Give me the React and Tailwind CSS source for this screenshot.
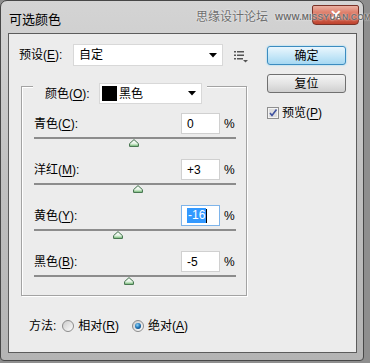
import React from 'react'

const SLIDERS = [
  { name: '青色', key: 'C', value: '0', v: 0 },
  { name: '洋红', key: 'M', value: '+3', v: 4 },
  { name: '黄色', key: 'Y', value: '-16', v: -16, selected: true },
  { name: '黑色', key: 'B', value: '-5', v: -5 },
]

function Mn({ label, k }) {
  return (
    <>
      {label}(<span className="underline underline-offset-[2px]">{k}</span>):
    </>
  )
}

function Arrow() {
  return (
    <svg width="8" height="5" viewBox="0 0 8 5" className="ml-auto">
      <path d="M0 0 H8 L4 4.5 Z" fill="#000" />
    </svg>
  )
}

function Thumb() {
  return (
    <svg width="10" height="8" viewBox="0 0 10 8">
      <defs>
        <linearGradient id="thumbFill" x1="0" y1="0" x2="0" y2="1">
          <stop offset="0" stopColor="#ffffff" />
          <stop offset="0.55" stopColor="#e8f4e8" />
          <stop offset="1" stopColor="#7cc47c" />
        </linearGradient>
      </defs>
      <path d="M5 0.6 L9.4 4.6 L9.4 7.4 L0.6 7.4 L0.6 4.6 Z" fill="url(#thumbFill)" stroke="#3e6e48" strokeWidth="1" />
    </svg>
  )
}

function MenuIcon() {
  return (
    <svg width="14" height="12" viewBox="0 0 14 12">
      <rect x="0" y="0" width="2" height="1.5" fill="#555" />
      <rect x="3" y="0" width="7" height="1.5" fill="#555" />
      <rect x="0" y="3.5" width="2" height="1.5" fill="#555" />
      <rect x="3" y="3.5" width="7" height="1.5" fill="#555" />
      <rect x="0" y="7" width="2" height="1.5" fill="#555" />
      <rect x="3" y="7" width="6" height="1.5" fill="#555" />
      <path d="M9 9 H14 L11.5 11.5 Z" fill="#555" />
    </svg>
  )
}

function SliderRow({ s, first }) {
  return (
    <div className={first ? 'mt-[9px]' : 'mt-[12px]'}>
      <div className="flex items-center h-[21px]">
        <span className="leading-none">
          <Mn label={s.name} k={s.key} />
        </span>
        <div
          className={`ml-auto w-[39px] h-[21px] bg-white flex items-center pl-[5px] border ${
            s.selected ? 'border-[#7eb4ea]' : 'border-[#d0d0d0]'
          }`}
        >
          {s.selected ? (
            <span className="flex items-center">
              <span className="bg-[#3399ff] text-white leading-[15px] px-[1px]">{s.value}</span>
              <span className="w-[1px] h-[14px] bg-black" />
            </span>
          ) : (
            <span className="leading-none">{s.value}</span>
          )}
        </div>
        <span className="ml-[4px] w-[12px] leading-none">%</span>
      </div>
      <div className="relative mt-[3px] h-[2px] bg-[#8c8c8c]">
        <div className="absolute top-[2px]" style={{ left: 100 + s.v - 5 }}>
          <Thumb />
        </div>
      </div>
      <div className="h-[8px]" />
    </div>
  )
}

function Radio({ checked }) {
  return (
    <svg width="12" height="12" viewBox="0 0 12 12">
      <defs>
        <linearGradient id={checked ? 'rOn' : 'rOff'} x1="0" y1="0" x2="1" y2="1">
          <stop offset="0" stopColor="#c9c9c9" />
          <stop offset="1" stopColor="#ffffff" />
        </linearGradient>
        <radialGradient id="dot" cx="0.4" cy="0.35" r="0.7">
          <stop offset="0" stopColor="#8fd6f8" />
          <stop offset="0.6" stopColor="#2477b8" />
          <stop offset="1" stopColor="#0d4a80" />
        </radialGradient>
      </defs>
      <circle cx="6" cy="6" r="5.5" fill={`url(#${checked ? 'rOn' : 'rOff'})`} stroke="#8a8a8a" strokeWidth="1" />
      {checked && <circle cx="6" cy="6" r="3" fill="url(#dot)" />}
    </svg>
  )
}

export default function App() {
  return (
    <div className="w-[370px] h-[363px] bg-[#8e8e8e] font-['Liberation_Sans','Noto_Sans_CJK_SC',sans-serif] text-[12px] text-black overflow-hidden">
      <div className="w-[364px] h-[361px] rounded-t-[7px] rounded-b-[4px] border border-[#474747] bg-gradient-to-b from-[#d4d4d4] via-[#c0c0c0] to-[#b4b4b4]">
        {/* title bar */}
        <div className="relative h-[32px] flex items-center pl-[8px]">
          <span className="text-[13px] leading-none mt-[4px]">可选颜色</span>
          <div className="absolute right-[4px] top-[4px] w-[47px] h-[20px] rounded-b-[4px] rounded-t-[2px] border border-[#7a3328] bg-gradient-to-b from-[#eab0a2] via-[#d66a55] to-[#c0442f] flex items-center justify-center">
            <span className="text-white font-bold text-[14px] leading-none">✕</span>
          </div>
          <div className="absolute left-[195px] top-[10px] flex items-center gap-[7px] whitespace-nowrap text-[#6e6e6e] [text-shadow:0_0_2px_#fff]">
            <span className="text-[12px] leading-none">思缘设计论坛</span>
            <span className="text-[8.5px] font-bold leading-none tracking-[0.2px]">WWW.MISSYUAN.COM</span>
          </div>
        </div>

        {/* client area */}
        <div className="ml-[7px] w-[349px] h-[320px] border border-[#5c5c5c] bg-[#ececec] flex pl-[10px]">
          {/* left column */}
          <div className="w-[229px]">
            <div className="mt-[10px] flex items-center h-[22px]">
              <span className="leading-none w-[54px]">
                <Mn label="预设" k="E" />
              </span>
              <div className="w-[150px] h-[22px] bg-white border border-[#d8d8d8] flex items-center pl-[5px] pr-[5px]">
                <span className="leading-none">自定</span>
                <Arrow />
              </div>
              <div className="ml-[11px] mt-[3px]">
                <MenuIcon />
              </div>
            </div>

            <div className="mt-[20px] ml-[2px] w-[226px] h-[210px] border border-[#a3a3a3] shadow-[inset_1px_1px_0_#fff,1px_1px_0_#fff]">
              <div className="-mt-[4px] ml-[11px] w-[174px] flex items-center bg-[#ececec] pl-[12px]">
                <span className="leading-none w-[54px]">
                  <Mn label="颜色" k="O" />
                </span>
                <div className="w-[103px] h-[21px] bg-white border border-[#d8d8d8] flex items-center pl-[2px] pr-[5px]">
                  <span className="w-[15px] h-[15px] bg-black" />
                  <span className="ml-[2px] leading-none">黑色</span>
                  <Arrow />
                </div>
              </div>
              <div className="pl-[12px] pr-[10px]">
                {SLIDERS.map((s, i) => (
                  <SliderRow key={s.key} s={s} first={i === 0} />
                ))}
              </div>
            </div>

            <div className="mt-[23px] flex items-center h-[14px] pl-[10px]">
              <span className="leading-none">方法:</span>
              <span className="ml-[6px] flex">
                <Radio />
              </span>
              <span className="ml-[4px] leading-none">
                相对(<span className="underline underline-offset-[2px]">R</span>)
              </span>
              <span className="ml-[13px] flex">
                <Radio checked />
              </span>
              <span className="ml-[4px] leading-none">
                绝对(<span className="underline underline-offset-[2px]">A</span>)
              </span>
            </div>
          </div>

          {/* right column */}
          <div className="ml-[19px] w-[79px] pt-[12px]">
            <div className="h-[19px] rounded-[3px] border border-[#3c8cc0] bg-gradient-to-b from-[#eaf6fd] via-[#c8e8f8] to-[#a6d8f2] shadow-[0_0_2px_#7ad0f8] flex items-center justify-center">
              <span className="leading-none">确定</span>
            </div>
            <div className="mt-[9px] h-[19px] rounded-[3px] border border-[#707070] bg-gradient-to-b from-[#f4f4f4] via-[#e4e4e4] to-[#cfcfcf] flex items-center justify-center">
              <span className="leading-none">复位</span>
            </div>
            <div className="mt-[13px] flex items-center h-[13px]">
              <svg width="12" height="12" viewBox="0 0 12 12">
                <rect x="0.5" y="0.5" width="11" height="11" fill="#f4f4f4" stroke="#8f8f8f" />
                <rect x="2" y="2" width="8" height="8" fill="#dedede" />
                <path d="M3 6 L5 8.5 L9.5 2.5" fill="none" stroke="#3f52a0" strokeWidth="1.6" />
              </svg>
              <span className="ml-[3px] leading-none">
                预览(<span className="underline underline-offset-[2px]">P</span>)
              </span>
            </div>
          </div>
        </div>
      </div>
    </div>
  )
}
